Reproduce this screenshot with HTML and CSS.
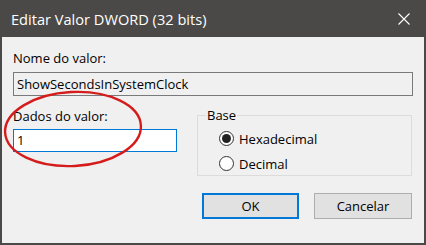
FILE: index.html
```html
<!DOCTYPE html>
<html lang="pt">
<head>
  <meta charset="UTF-8">
  <title>Editar Valor DWORD (32 bits)</title>
  <link rel="stylesheet" href="styles.css">
</head>
<body>
  <div class="window">
    <!-- barra de título -->
    <div class="titlebar">
      <span class="title">Editar Valor DWORD (32 bits)</span>
      <svg class="close" viewBox="0 0 12 12" width="12" height="12">
        <path d="M0.5,0.5 L11.5,11.5 M11.5,0.5 L0.5,11.5" stroke="#fff" stroke-width="1.1" fill="none"></path>
      </svg>
    </div>

    <div class="client">
      <div class="label">Nome do valor:</div>
      <div class="textbox readonly">ShowSecondsInSystemClock</div>

      <div class="row">
        <div class="col-data">
          <div class="label">Dados do valor:</div>
          <div class="textbox focus">1</div>
        </div>
        <fieldset class="group">
          <legend>Base</legend>
          <div class="radio-item"><span class="radio checked"></span>Hexadecimal</div>
          <div class="radio-item"><span class="radio"></span>Decimal</div>
        </fieldset>
      </div>

      <div class="buttons">
        <button class="default">OK</button>
        <button>Cancelar</button>
      </div>
    </div>

    <!-- marcação em vermelho -->
    <svg class="mark" viewBox="0 0 150 90" width="150" height="90">
      <ellipse cx="71" cy="44" rx="68" ry="37" transform="rotate(-3 71 44)" fill="none" stroke="#d41c1c" stroke-width="2.4"></ellipse>
    </svg>
  </div>
</body>
</html>
```

FILE: styles.css
```css
body {
  margin: 0;
  font-family: "Open Sans", "Liberation Sans", sans-serif;
  color: #000;
  background: #fff;
}

.window {
  position: relative;
  width: 426px;
  height: 245px;
  box-sizing: border-box;
  background: #f0f0f0;
  border: 2px solid #4b4947;
  border-top: none;
  overflow: hidden;
}

.titlebar {
  height: 37px;
  background: #4b4947;
  margin: 0 -2px;
  padding: 0 16px 0 11px;
  display: flex;
  align-items: center;
  justify-content: space-between;
}

.title {
  color: #fff;
  font-size: 14.6px;
}

.client {
  padding: 13px 11px 0 11px;
  font-size: 13px;
}

.label {
  line-height: 16px;
}

.textbox {
  box-sizing: border-box;
  height: 24px;
  margin-top: 6px;
  padding: 0 3px;
  line-height: 22px;
  border: 1px solid #7a7a7a;
}

.textbox.readonly {
  background: #f0f0f0;
}

.textbox.focus {
  height: 23px;
  margin-top: 5px;
  line-height: 21px;
  border-color: #0078d7;
  background: #fff;
}

.row {
  display: flex;
  gap: 20px;
  margin-top: 12px;
}

.col-data {
  width: 164px;
}

.group {
  flex: 1;
  margin: 0;
  margin-top: -1px;
  padding: 3px 0 8px 21px;
  height: 69px;
  box-sizing: border-box;
  border: 1px solid #dcdcdc;
  margin-right: 1px;
}

.group legend {
  padding: 0 1px;
  margin-left: -13px;
  line-height: 16px;
}

.radio-item {
  display: flex;
  align-items: center;
  height: 25px;
}

.radio {
  box-sizing: border-box;
  width: 15px;
  height: 15px;
  margin-right: 5px;
  border: 1px solid #333;
  border-radius: 50%;
  background: #fff;
  display: flex;
  align-items: center;
  justify-content: center;
}

.radio.checked::after {
  content: "";
  width: 9px;
  height: 9px;
  border-radius: 50%;
  background: #222;
}

.buttons {
  display: flex;
  justify-content: flex-end;
  gap: 15px;
  margin-top: 17px;
  padding-right: 1px;
}

.buttons button {
  width: 98px;
  height: 26px;
  font-family: inherit;
  font-size: 13px;
  background: #e1e1e1;
  border: 1px solid #adadad;
  padding: 0;
  color: #000;
}

.buttons button.default {
  width: 97px;
  border: 2px solid #0078d7;
}

.mark {
  position: absolute;
  left: 0;
  top: 85px;
}
```
